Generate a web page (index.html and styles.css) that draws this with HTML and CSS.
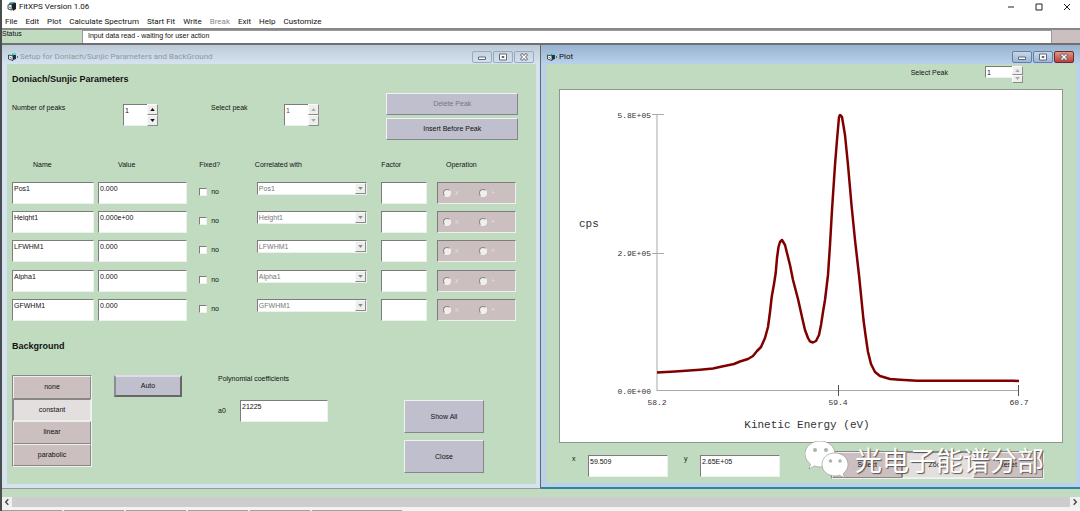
FILE: index.html
```html
<!DOCTYPE html>
<html lang="en">
<head>
<meta charset="utf-8">
<title>FitXPS Version 1.06</title>
<link rel="stylesheet" href="styles.css">
</head>
<body>
<svg class="defs" aria-hidden="true">
  <symbol id="app-icon" viewBox="0 0 10 10">
    <path d="M2 1l4-1 3 1v6l-3 2-1-3z" fill="#222"/>
    <path d="M2 1l4-1 2 1-4 1z" fill="#3cc"/>
    <path d="M1 3l4-1v6l-4-1z" fill="#eef" stroke="#222" stroke-width=".8"/>
    <path d="M2 5l2 1" stroke="#29a" stroke-width="1"/>
  </symbol>
  <symbol id="form-icon" viewBox="0 0 10 8">
    <path d="M4 1h4v5l-3 1V3z" fill="#234"/>
    <path d="M4 0h4v2H5z" fill="#5dd"/>
    <path d="M.5 2l4.500 1v4.500L.5 6z" fill="#fff" stroke="#222" stroke-width=".8"/>
    <path d="M1.500 4l2.500 1.500" stroke="#29a"/>
    <path d="M9.500 3v2" stroke="#667"/>
  </symbol>
  <symbol id="up" viewBox="0 0 6 4"><path d="M0 4l3-4 3 4z" fill="currentColor"/></symbol>
  <symbol id="down" viewBox="0 0 6 4"><path d="M0 0l3 4 3-4z" fill="currentColor"/></symbol>
  <symbol id="w-min" viewBox="0 0 10 8"><path d="M1.500 4h7v2.500h-7z" fill="#fff" stroke="#667" stroke-width="1"/></symbol>
  <symbol id="w-max" viewBox="0 0 10 8"><path d="M1.500 1h7v6h-7zM4 3.500h2v1H4z" fill="#fff" stroke="#667" stroke-width="1"/></symbol>
  <symbol id="w-close" viewBox="0 0 10 8"><path d="M2 1l6 6M8 1l-6 6" stroke="#667" stroke-width="3"/><path d="M2.500 1.500l5 5M7.500 1.500l-5 5" stroke="#fff" stroke-width="1.400"/></symbol>
</svg>

<div class="app">
  <header class="titlebar">
    <svg class="app-icon"><use href="#app-icon"/></svg>
    <h1 class="app-title">FitXPS Version 1.06</h1>
    <div class="sys">
      <button aria-label="Minimize"><svg viewBox="0 0 8 8"><path d="M1 4h6"/></svg></button>
      <button aria-label="Maximize"><svg viewBox="0 0 8 8"><path d="M1 1h6v6H1z"/></svg></button>
      <button aria-label="Close"><svg viewBox="0 0 8 8"><path d="M1 1l6 6M7 1l-6 6"/></svg></button>
    </div>
  </header>
  <nav class="menu">
    <button>File</button><button>Edit</button><button>Plot</button><button>Calculate Spectrum</button><button>Start Fit</button><button>Write</button><button disabled>Break</button><button>Exit</button><button>Help</button><button>Customize</button>
  </nav>
  <div class="status">
    <span class="status-label">Status</span>
    <output class="status-text">Input data read - waiting for user action</output>
    <span class="status-end"></span>
  </div>

  <main class="workspace">
    <section class="win setup">
      <header class="win-bar">
        <svg class="form-icon"><use href="#form-icon"/></svg>
        <h2 class="win-title">Setup for Doniach/Sunjic Parameters and BackGround</h2>
        <div class="win-buttons">
          <button aria-label="Minimize"><svg><use href="#w-min"/></svg></button>
          <button aria-label="Restore"><svg><use href="#w-max"/></svg></button>
          <button aria-label="Close"><svg><use href="#w-close"/></svg></button>
        </div>
      </header>
      <div class="win-body setup-body">
        <div class="peaks">
          <div class="peaks-left">
            <h3>Doniach/Sunjic Parameters</h3>
            <div class="peak-fields">
              <label for="npeaks">Number of peaks</label>
              <div class="spin"><input id="npeaks" value="1"><div class="spin-buttons"><button aria-label="More"><svg><use href="#up"/></svg></button><button aria-label="Fewer"><svg><use href="#down"/></svg></button></div></div>
              <label for="selpeak">Select peak</label>
              <div class="spin"><input id="selpeak" value="1" disabled><div class="spin-buttons"><button aria-label="Next" disabled><svg><use href="#up"/></svg></button><button aria-label="Previous" disabled><svg><use href="#down"/></svg></button></div></div>
            </div>
          </div>
          <div class="peaks-right">
            <button class="btn" disabled>Delete Peak</button>
            <button class="btn">Insert Before Peak</button>
          </div>
        </div>

        <table class="params">
          <colgroup><col class="c-name"><col class="c-value"><col class="c-fixed"><col class="c-corr"><col class="c-factor"><col class="c-op"></colgroup>
          <thead><tr><th class="h-name">Name</th><th class="h-value">Value</th><th>Fixed?</th><th>Correlated with</th><th>Factor</th><th class="h-op">Operation</th></tr></thead>
          <tbody>
            <tr>
              <td><input class="field" aria-label="Name 1" value="Pos1"></td>
              <td><input class="field" aria-label="Value 1" value="0.000"></td>
              <td><label class="check"><input type="checkbox">no</label></td>
              <td><div class="combo"><select aria-label="Correlated with 1" disabled><option>Pos1</option></select><span class="combo-arrow"><svg><use href="#down"/></svg></span></div></td>
              <td><input class="field" aria-label="Factor 1"></td>
              <td><div class="op"><label><input type="radio" name="op1" disabled>x</label><label><input type="radio" name="op1" disabled>+</label></div></td>
            </tr>
            <tr>
              <td><input class="field" aria-label="Name 2" value="Height1"></td>
              <td><input class="field" aria-label="Value 2" value="0.000e+00"></td>
              <td><label class="check"><input type="checkbox">no</label></td>
              <td><div class="combo"><select aria-label="Correlated with 2" disabled><option>Height1</option></select><span class="combo-arrow"><svg><use href="#down"/></svg></span></div></td>
              <td><input class="field" aria-label="Factor 2"></td>
              <td><div class="op"><label><input type="radio" name="op2" disabled>x</label><label><input type="radio" name="op2" disabled>+</label></div></td>
            </tr>
            <tr>
              <td><input class="field" aria-label="Name 3" value="LFWHM1"></td>
              <td><input class="field" aria-label="Value 3" value="0.000"></td>
              <td><label class="check"><input type="checkbox">no</label></td>
              <td><div class="combo"><select aria-label="Correlated with 3" disabled><option>LFWHM1</option></select><span class="combo-arrow"><svg><use href="#down"/></svg></span></div></td>
              <td><input class="field" aria-label="Factor 3"></td>
              <td><div class="op"><label><input type="radio" name="op3" disabled>x</label><label><input type="radio" name="op3" disabled>+</label></div></td>
            </tr>
            <tr>
              <td><input class="field" aria-label="Name 4" value="Alpha1"></td>
              <td><input class="field" aria-label="Value 4" value="0.000"></td>
              <td><label class="check"><input type="checkbox">no</label></td>
              <td><div class="combo"><select aria-label="Correlated with 4" disabled><option>Alpha1</option></select><span class="combo-arrow"><svg><use href="#down"/></svg></span></div></td>
              <td><input class="field" aria-label="Factor 4"></td>
              <td><div class="op"><label><input type="radio" name="op4" disabled>x</label><label><input type="radio" name="op4" disabled>+</label></div></td>
            </tr>
            <tr>
              <td><input class="field" aria-label="Name 5" value="GFWHM1"></td>
              <td><input class="field" aria-label="Value 5" value="0.000"></td>
              <td><label class="check"><input type="checkbox">no</label></td>
              <td><div class="combo"><select aria-label="Correlated with 5" disabled><option>GFWHM1</option></select><span class="combo-arrow"><svg><use href="#down"/></svg></span></div></td>
              <td><input class="field" aria-label="Factor 5"></td>
              <td><div class="op"><label><input type="radio" name="op5" disabled>x</label><label><input type="radio" name="op5" disabled>+</label></div></td>
            </tr>
          </tbody>
        </table>

        <h3 class="bg-title">Background</h3>
        <div class="background">
          <div class="toggles bg-type" role="group" aria-label="Background type">
            <button>none</button><button aria-pressed="true">constant</button><button>linear</button><button>parabolic</button>
          </div>
          <button class="btn auto">Auto</button>
          <div class="poly">
            <p>Polynomial coefficients</p>
            <div class="coef"><label for="a0">a0</label><input class="field" id="a0" value="21225"></div>
          </div>
          <div class="actions"><button class="btn tall">Show All</button><button class="btn tall">Close</button></div>
        </div>
      </div>
    </section>

    <section class="win plot active">
      <header class="win-bar">
        <svg class="form-icon"><use href="#form-icon"/></svg>
        <h2 class="win-title">Plot</h2>
        <div class="win-buttons">
          <button aria-label="Minimize"><svg><use href="#w-min"/></svg></button>
          <button aria-label="Restore"><svg><use href="#w-max"/></svg></button>
          <button class="close" aria-label="Close"><svg><use href="#w-close"/></svg></button>
        </div>
      </header>
      <div class="win-body plot-body">
        <div class="plot-top">
          <label for="plotpeak">Select Peak</label>
          <div class="spin small"><input id="plotpeak" value="1"><div class="spin-buttons"><button aria-label="Next" disabled><svg><use href="#up"/></svg></button><button aria-label="Previous" disabled><svg><use href="#down"/></svg></button></div></div>
        </div>
        <div class="canvas">
          <svg class="chart" viewBox="0 0 502 352" role="img" aria-label="Counts per second against kinetic energy">
            <g class="axis">
              <path d="M97 24v277M92 24.500h12M92 163.500h12M97 300.500h362"/>
              <path class="tick" d="M278.500 295v11M458.500 295v11"/>
            </g>
            <polyline class="curve" points="97,282.500 115,281.500 140,279.700 153,278.500 162,276.500 174,274 180,271.500 188,269 193,266 197,261 201,257 205,248 208,237 210,222 211.700,207 214,194 215.700,183 217,168 218.500,157 220,152 222,150 225,155 230,175 233,190 238,209 242,227 245,240 248,248 250,251.500 253,252.500 256,251 259,245 261,235 263,222 265,210 268,185 270,155 272,120 275,75 277,50 279,27 280,25 282,27 285,45 288,75 291.500,115 295,150 299,185 301,205 303.500,230 305.500,245 308,262 311,274 315,282 320,286 330,289 340,289.700 357,290.700 453,290.700 459,291"/>
            <g class="tick-text">
              <text x="91" y="28" text-anchor="end">5.8E+05</text>
              <text x="91" y="166" text-anchor="end">2.9E+05</text>
              <text x="91" y="304" text-anchor="end">0.0E+00</text>
              <text x="97" y="315" text-anchor="middle">58.2</text>
              <text x="278" y="315" text-anchor="middle">59.4</text>
              <text x="459" y="315" text-anchor="middle">60.7</text>
            </g>
            <g class="axis-text">
              <text x="19" y="137">cps</text>
              <text x="247" y="338" text-anchor="middle">Kinetic Energy (eV)</text>
            </g>
          </svg>
        </div>
        <div class="plot-bottom">
          <label for="px">x</label><input class="field" id="px" value="59.509">
          <label class="y-label" for="py">y</label><input class="field" id="py" value="2.65E+05">
          <div class="mode-wrap">
            <div class="toggles mode" role="group" aria-label="Plot mode"><button>Select</button><button aria-pressed="true">Zoom</button><button>Reset</button></div>
            <div class="mark">
              <svg viewBox="0 0 44 38" aria-hidden="true">
                <g fill="#fff" stroke="#8a918a" stroke-width=".6">
                  <path d="M15 0C6.500 0 0 5.800 0 13c0 4 2.200 7.500 5.500 10L4 28l5.500-3c1.700.6 3.600.9 5.500.9 8.500 0 15-5.800 15-13S23.500 0 15 0z"/>
                  <path d="M30 12c-7.500 0-13 5-13 11.500S22.500 35 30 35c1.600 0 3.200-.3 4.600-.8l5 2.800-1.400-4.500c3-2.100 4.800-5.300 4.800-9C43 17 37.500 12 30 12z"/>
                </g>
                <g fill="#a9b5a8"><circle cx="10" cy="9" r="2"/><circle cx="21" cy="9" r="2"/><circle cx="25.500" cy="20" r="1.800"/><circle cx="35" cy="20" r="1.800"/></g>
              </svg>
              <span lang="zh">光电子能谱分部</span>
            </div>
          </div>
        </div>
      </div>
    </section>
  </main>

  <div class="scroll">
    <button aria-label="Scroll left"><svg viewBox="0 0 6 6"><path d="M4 1L2 3l2 2"/></svg></button>
    <span class="thumb"></span>
    <button aria-label="Scroll right"><svg viewBox="0 0 6 6"><path d="M2 1l2 2-2 2"/></svg></button>
  </div>
  <div class="tray"><span></span><span></span><span></span><span></span><span></span><span></span></div>
</div>
</body>
</html>
```
FILE: styles.css
```css
:root {
  --green: #c1dbc0;
  --lilac: #c0bfce;
  --mauve: #cbbfbf;
  --dark: #7c7c7c;
  --light: #eef2ee;
}
* { box-sizing: border-box; }
body {
  margin: 0;
  background: #4a4d50;
  color: #111;
  font: 7px/8px "Liberation Sans", Arial, sans-serif;
}
h1, h2, h3, p { margin: 0; font-weight: normal; }
button, input, select { font: inherit; color: inherit; margin: 0; padding: 0; border-radius: 0; }
button { border: 0; background: none; }
svg { display: block; }
.defs { position: absolute; width: 0; height: 0; }

.app { display: flex; flex-direction: column; min-height: 100vh; margin-left: 2px; background: var(--green); }

/* Main window frame */
.titlebar { display: flex; align-items: center; gap: 2px; height: 14px; padding: 0 9px 0 5px; background: #fff; }
.app-icon { width: 10px; height: 10px; }
.app-title { flex: 1; font: 8px/12px Roboto, sans-serif; }
.sys { display: flex; gap: 20px; }
.sys svg { width: 8px; height: 8px; fill: none; stroke: #222; stroke-width: 1; }
.menu { display: flex; gap: 8px; height: 14px; padding: 2px 3px 0; background: #fff; font: 8px/12px Roboto, sans-serif; }
.menu button:disabled { color: #8a8a8a; }
.status { display: flex; height: 17px; border-top: 2px solid #888; border-bottom: 2px solid #707070; }
.status-label { width: 80px; }
.status-text { flex: 1; padding: 1px 5px; border: 1px solid #999; border-bottom: 0; background: #fff; }
.status-end { width: 28px; background: var(--mauve); }

/* Child windows */
.workspace { flex: 1; display: grid; grid-template-columns: 1fr 1fr; padding-bottom: 8px; }
.win { display: flex; flex-direction: column; min-width: 0; padding: 0 4px 4px 5px; background: #d5e2f0; border-bottom: 1px solid #999; border-right: 1px solid #666; }
.win.active { background: #b9d1ea; border-bottom: 2px solid #2f8498; border-right: 0; }
.win-bar { display: flex; align-items: center; gap: 2px; height: 19px; margin: 0 -4px 0 -5px; padding: 4px 6px 0; background: linear-gradient(#bdcad8, #d5e2f0); color: #8f979e; }
.active .win-bar { background: linear-gradient(#98b3d0, #b9d1ea); color: #111; }
.form-icon { width: 10px; height: 8px; }
.win-title { flex: 1; font: 8px/12px Roboto, sans-serif; }
.win-buttons { display: flex; gap: 1px; }
.win-buttons button { display: grid; place-items: center; width: 20px; height: 12px; border: 1px solid #9aabbe; border-radius: 2px; }
.active .win-buttons button { border-color: #667f9d; background: linear-gradient(#c6d8ea, #9cb8d6); }
.active .win-buttons .close { border-color: #6e2b26; background: linear-gradient(#de9588, #c14030); }
.win-buttons svg { width: 10px; height: 8px; }
.win-body { flex: 1; background: var(--green); }

/* Controls */
h3 { font-size: 9px; line-height: 10px; font-weight: bold; }
.btn { height: 22px; background: var(--lilac); border: 1px solid; border-color: #f1f1f1 #84838e #84838e #f1f1f1; }
.btn:disabled { color: #77767f; }
.btn.tall { height: 33px; }
.field, .spin input { display: block; background: #fff; border: 1px solid; border-color: var(--dark) var(--light) var(--light) var(--dark); }
.field { width: 100%; height: 22px; padding: 0 1px 10px; }
.spin { display: flex; width: 35px; height: 22px; }
.spin input { flex: 1; min-width: 0; padding: 1px 1px 9px; border-right: 0; }
.spin input:disabled { color: #555; }
.spin-buttons { display: flex; flex-direction: column; width: 11px; }
.spin-buttons button { flex: 1; display: grid; place-items: center; background: #eee; border: 1px solid; border-color: #fafafa #8c8c8c #8c8c8c #fafafa; }
.spin-buttons button:disabled { color: #aaa; }
.spin-buttons svg { width: 5px; height: 3px; }
.toggles { display: flex; border: 1px solid; border-color: #888 #f1f1f1 #f1f1f1 #888; background: var(--mauve); }
.toggles button { flex: 1; background: var(--mauve); border: 1px solid; border-color: #eee #8c8585 #8c8585 #eee; }
.toggles [aria-pressed="true"] { background: #e4dfdf; border-color: #888 #eee #eee #888; }

/* Setup form */
.setup-body { padding: 10px 18px 8px 5px; }
.peaks { display: flex; justify-content: space-between; }
.peaks-left { flex: 1; }
.peak-fields { display: grid; grid-template-columns: 111px 88px 73px 35px; margin-top: 20px; }
.peaks-right { display: flex; flex-direction: column; gap: 3px; width: 26%; padding-top: 19px; }
.params { width: 100%; margin-top: 20px; border-collapse: collapse; table-layout: fixed; }
.params th { height: 22px; padding: 1px 0 0; font-weight: normal; text-align: left; vertical-align: top; }
.params td { height: 29px; padding: 0 4px 0 0; vertical-align: top; }
.params tbody tr:nth-child(3) td { height: 30px; }
.c-name { width: 17%; }
.c-value { width: 20%; }
.c-fixed { width: 11%; }
.c-corr { width: 25%; }
.c-factor { width: 11%; }
.c-op { width: 16%; }
.params .h-name { padding-left: 21px; }
.params .h-value { padding-left: 20px; }
.params .h-op { padding-left: 9px; }
.check { display: flex; align-items: center; gap: 4px; padding-top: 6px; }
.check input { appearance: none; width: 8px; height: 8px; background: #fff; border: 1px solid; border-color: var(--dark) var(--light) var(--light) var(--dark); }
.combo { display: flex; height: 13px; margin: 0 10px 0 2px; border: 1px solid; border-color: var(--dark) var(--light) var(--light) var(--dark); background: #fff; }
.combo select { flex: 1; min-width: 0; appearance: none; padding-left: 1px; border: 0; background: #fff; color: #777; opacity: 1; }
.combo-arrow { display: grid; place-items: center; width: 11px; background: #eee; border: 1px solid; border-color: #fafafa #8c8c8c #8c8c8c #fafafa; color: #888; }
.combo-arrow svg { width: 5px; height: 3px; }
.params td:nth-child(2) { padding-right: 12px; }
.params td:nth-child(5) { padding-right: 10px; }
.params td:nth-child(6) { padding-right: 2px; }
.op { display: grid; grid-template-columns: 1fr 1fr; align-items: center; height: 22px; padding-left: 5px; background: var(--mauve); border: 1px solid; border-color: var(--dark) var(--light) var(--light) var(--dark); }
.op label { display: flex; align-items: center; gap: 4px; color: #e4dcdc; font-size: 7px; }
.op input { appearance: none; width: 8px; height: 8px; border: 1px solid; border-color: #8f8585 #f4f0f0 #f4f0f0 #8f8585; border-radius: 50%; background: #f0eeee; }
.bg-title { margin-top: 13px; }
.background { display: flex; margin-top: 24px; }
.toggles.bg-type { flex-direction: column; width: 80px; height: 92px; }
.auto { width: 68px; margin-left: 22px; border-width: 2px; border-color: #dedde6 #6b6666 #6b6666 #8c8b96; }
.poly { flex: 1; padding-left: 36px; }
.coef { display: grid; grid-template-columns: 22px 88px; align-items: center; margin-top: 17px; }
.actions { display: flex; flex-direction: column; gap: 7px; width: 80px; margin-right: 34px; padding-top: 25px; }

/* Plot window */
.plot-body { display: flex; flex-direction: column; padding: 0 13px; }
.plot-top { display: flex; justify-content: flex-end; gap: 37px; height: 25px; padding: 2px 40px 0 0; }
.plot-top label { padding-top: 3px; }
.spin.small { width: 38px; height: 17px; }
.small input { height: 12px; padding: 0 1px; }
.canvas { background: #fff; border: 1px solid #8f968f; }
.chart { width: 100%; height: auto; }
.axis { fill: none; stroke: #aaa; stroke-width: 1; }
.tick { stroke: #555; }
.curve { fill: none; stroke: #800000; stroke-width: 2.5; stroke-linejoin: round; }
.tick-text, .axis-text { font-family: "Liberation Mono", monospace; fill: #333; }
.tick-text { font-size: 8px; }
.axis-text { font-size: 11px; }
.plot-bottom { display: grid; grid-template-columns: 16px 80px 32px 80px 1fr; align-items: start; padding: 12px 19px 0 13px; }
.y-label { padding-left: 16px; }
.mode-wrap { position: relative; padding-left: 51px; }
.toggles.mode { height: 28px; margin-top: -4px; }
.mark { position: absolute; right: 0; bottom: 0; display: flex; align-items: center; gap: 6px; color: #fff; pointer-events: none; }
.mark svg { width: 44px; height: 38px; }
.mark span { font: 27px/32px "Noto Sans CJK SC", sans-serif; white-space: nowrap; text-shadow: 1px 1px 1px #555; }

/* Bottom edge */
.scroll { display: flex; height: 10px; background: #f0f0f0; }
.scroll button { display: grid; place-items: center; width: 10px; }
.scroll svg { width: 8px; height: 8px; fill: none; stroke: #444; stroke-width: 1; }
.thumb { flex: 1; background: #cdcdcd; }
.tray { display: flex; gap: 2px; height: 4px; background: #f3f3f3; }
.tray span { width: 60px; border-bottom: 1px solid #a0a0a0; }
.tray span:last-child { width: 90px; }
```
